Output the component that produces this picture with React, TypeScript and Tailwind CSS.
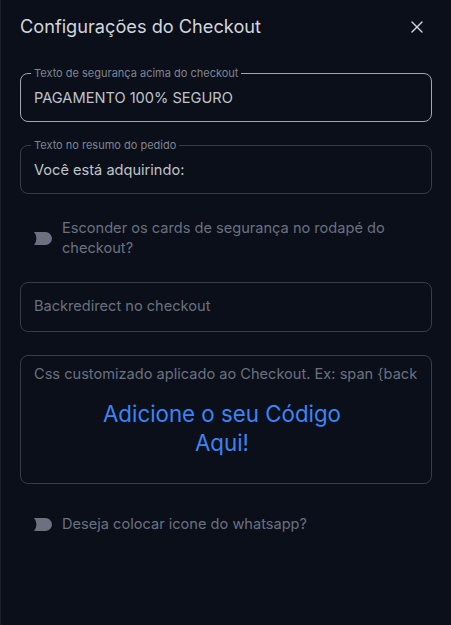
import { X } from "lucide-react";

interface OutlinedFieldProps {
  label: string;
  value: string;
  active?: boolean;
}

function OutlinedField({ label, value, active }: OutlinedFieldProps) {
  return (
    <fieldset
      className={`rounded-lg border px-[10px] ${active ? "border-[#a2a6ae]" : "border-[#363c48]"}`}
    >
      <legend className="px-[3px] text-[11px] leading-[12px] text-[#7f8591]">{label}</legend>
      <div className="h-[42px] px-[3px] pt-[9px] text-[14.6px] leading-[20px] text-[#c0c4cb]">{value}</div>
    </fieldset>
  );
}

function Toggle() {
  return (
    <svg width="19" height="13" viewBox="0 0 19 13" className="shrink-0" aria-hidden="true">
      <path d="M1 0 H12.5 A6.5 6.5 0 0 1 12.5 13 H1 A10 10 0 0 0 1 0 Z" fill="#6b7180" />
    </svg>
  );
}

function ToggleRow({ text }: { text: string }) {
  return (
    <div className="flex items-center gap-[10px] pl-[13px]">
      <Toggle />
      <span className="text-[14.6px] leading-[20px] text-[#6b7180]">{text}</span>
    </div>
  );
}

export default function App() {
  return (
    <div
      className="min-h-[625px] w-full border-l border-[#1c212c] bg-[#0a0f19]"
      style={{ fontFamily: "Inter, 'Noto Sans', sans-serif" }}
    >
      {/* Header */}
      <div className="flex h-[54px] items-center justify-between pl-[19px] pr-[24px]">
        <h2 className="text-[18.2px] font-normal text-[#d3d6dc]">Configurações do Checkout</h2>
        <X size={20} strokeWidth={1.6} color="#d3d6dc" />
      </div>

      <div className="flex flex-col px-[19px] pt-[13px]">
        <OutlinedField label="Texto de segurança acima do checkout" value="PAGAMENTO 100% SEGURO" active />
        <div className="mt-[17px]">
          <OutlinedField label="Texto no resumo do pedido" value="Você está adquirindo:" />
        </div>

        <div className="mt-[24px]">
          <ToggleRow text="Esconder os cards de segurança no rodapé do checkout?" />
        </div>

        <div className="mt-[24px] flex h-[50px] items-center rounded-lg border border-[#363c48] px-[13px] text-[14.6px] text-[#6b7180]">
          Backredirect no checkout
        </div>

        <div className="mt-[23px] flex h-[129px] flex-col rounded-lg border border-[#363c48] pl-[13px] pr-[21px] pt-[8px]">
          <div className="whitespace-nowrap text-[14.6px] leading-[20px] text-[#6b7180]">
            Css customizado aplicado ao Checkout. Ex: span {"{back"}
          </div>
          <div className="mx-auto mt-[15px] w-[250px] text-center text-[22.3px] leading-[29px] text-[#3b84f5]">
            Adicione o seu Código Aqui!
          </div>
        </div>

        <div className="mt-[30px]">
          <ToggleRow text="Deseja colocar icone do whatsapp?" />
        </div>
      </div>
    </div>
  );
}
